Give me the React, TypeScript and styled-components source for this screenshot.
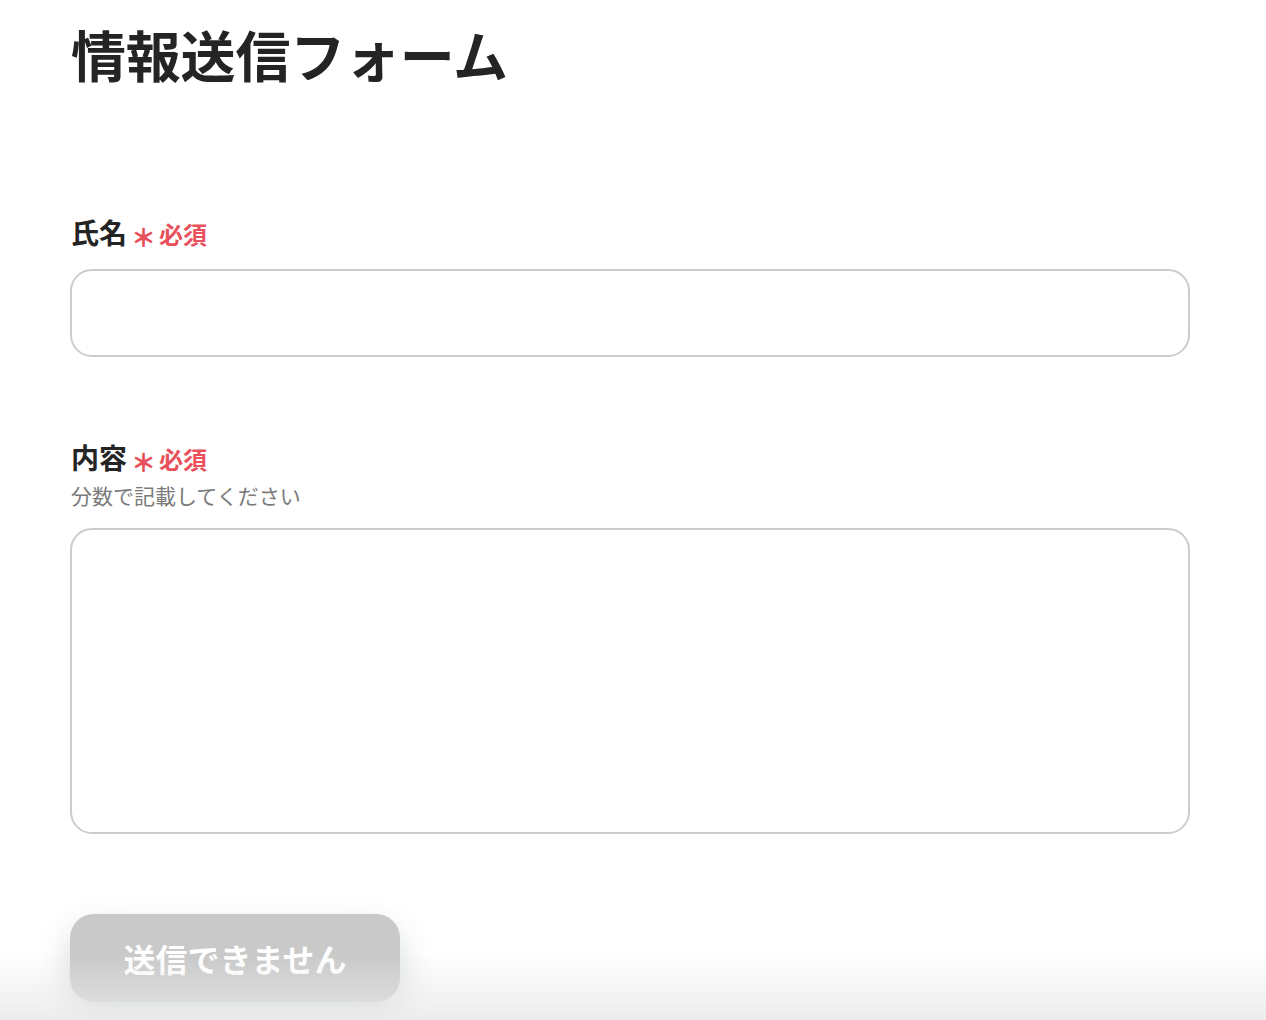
import React from "react";
import styled, { createGlobalStyle } from "styled-components";

const GlobalStyle = createGlobalStyle`
  * { box-sizing: border-box; }
  body {
    margin: 0;
    background: #ffffff;
    color: #222222;
    font-family: "Noto Sans CJK JP", "Noto Sans", sans-serif;
  }
`;

const Page = styled.main`
  padding: 13px 76px 0 70px;
  min-height: 1020px;
`;

const Title = styled.h1`
  margin: 0 0 0 1px;
  font-size: 55px;
  line-height: 80px;
  font-weight: 700;
  color: #242424;
  letter-spacing: -0.2px;
`;

const Form = styled.form`
  display: flex;
  flex-direction: column;
  margin-top: 121px;
`;

const Field = styled.div<{ $gap: number }>`
  display: flex;
  flex-direction: column;
  margin-bottom: ${({ $gap }) => $gap}px;
`;

const LabelRow = styled.label`
  display: flex;
  align-items: baseline;
  gap: 4px;
  margin-left: 1px;
  font-size: 28px;
  line-height: 36px;
  font-weight: 700;
  color: #242424;
`;

const Required = styled.span`
  display: inline-flex;
  align-items: baseline;
  gap: 3px;
  color: #e8505b;
  font-size: 24px;
  font-weight: 700;
`;

const Star = styled.span`
  font-size: 25px;
  font-weight: 900;
  position: relative;
  top: 3px;
`;

const Hint = styled.p`
  margin: 5px 0 0 1px;
  font-size: 21px;
  line-height: 26px;
  color: #7a7a7a;
`;

const TextInput = styled.input`
  width: 100%;
  height: 88px;
  margin-top: 17px;
  border: 2px solid #cccccc;
  border-radius: 22px;
  background: #ffffff;
  padding: 0 24px;
  font-size: 22px;
  font-family: inherit;
  outline: none;
`;

const TextArea = styled.textarea`
  width: 100%;
  height: 306px;
  margin-top: 20px;
  border: 2px solid #cccccc;
  border-radius: 22px;
  background: #ffffff;
  padding: 20px 24px;
  font-size: 22px;
  font-family: inherit;
  resize: none;
  outline: none;
  display: block;
`;

const SubmitButton = styled.button`
  width: 330px;
  height: 88px;
  border: none;
  border-radius: 24px;
  background: #c9c9c9;
  color: #ffffff;
  font-family: inherit;
  font-size: 32px;
  font-weight: 700;
  letter-spacing: 0;
  box-shadow: 0 16px 34px rgba(40, 60, 70, 0.2);
  cursor: not-allowed;
`;

const BottomFade = styled.div`
  position: fixed;
  left: 0;
  right: 0;
  bottom: 0;
  height: 66px;
  pointer-events: none;
  background: linear-gradient(to bottom, rgba(235, 236, 237, 0) 0%, rgba(232, 233, 234, 0.85) 100%);
`;

export default function App() {
  return (
    <>
      <GlobalStyle />
      <Page>
        <Title>情報送信フォーム</Title>
        <Form onSubmit={(e) => e.preventDefault()}>
          <Field $gap={82}>
            <LabelRow>
              氏名
              <Required>
                <Star>＊</Star>必須
              </Required>
            </LabelRow>
            <TextInput type="text" />
          </Field>
          <Field $gap={80}>
            <LabelRow>
              内容
              <Required>
                <Star>＊</Star>必須
              </Required>
            </LabelRow>
            <Hint>分数で記載してください</Hint>
            <TextArea />
          </Field>
          <SubmitButton type="submit" disabled>
            送信できません
          </SubmitButton>
        </Form>
      </Page>
      <BottomFade />
    </>
  );
}
